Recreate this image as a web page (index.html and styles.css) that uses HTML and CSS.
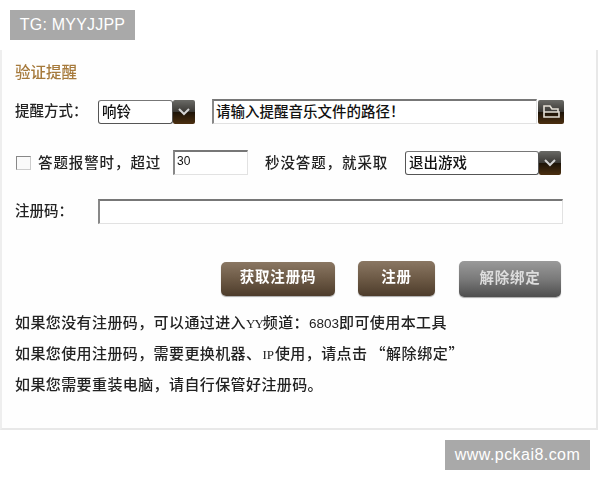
FILE: index.html
```html
<!DOCTYPE html>
<html lang="zh">
<head>
<meta charset="utf-8">
<title>验证提醒</title>
<link rel="stylesheet" href="styles.css">
</head>
<body>
<div class="page">
  <div class="tag tag-top">TG: MYYJJPP</div>
  <main class="panel">
    <div class="soft">
      <h2 class="title">验证提醒</h2>
      <div class="row row-1">
        <span class="label">提醒方式：</span>
        <div class="select select-ring">
          <span class="select-value">响铃</span>
          <span class="dark-btn arrow-btn"><svg viewBox="0 0 22 24" width="22" height="24"><path d="M6 9l5 5 5-5" fill="none" stroke="#d5d5d5" stroke-width="2"/></svg></span>
        </div>
        <div class="field field-path">请输入提醒音乐文件的路径！</div>
        <span class="dark-btn folder-btn"><svg viewBox="0 0 26 24" width="26" height="24"><path d="M6 16V6h6l2 3h6v3M6 12h15v5H6z" fill="none" stroke="#e4dfd5" stroke-width="1.6"/></svg></span>
      </div>
      <div class="row row-2">
        <span class="checkbox"></span>
        <span class="text-alarm">答题报警时，超过</span>
        <div class="field field-num">30</div>
        <span class="text-action">秒没答题，就采取</span>
        <div class="select select-action">
          <span class="select-value">退出游戏</span>
          <span class="dark-btn arrow-btn"><svg viewBox="0 0 22 24" width="22" height="24"><path d="M6 9l5 5 5-5" fill="none" stroke="#d5d5d5" stroke-width="2"/></svg></span>
        </div>
      </div>
      <div class="row row-3">
        <span class="label">注册码：</span>
        <div class="field field-code"></div>
      </div>
      <div class="buttons">
        <span class="btn btn-get">获取注册码</span>
        <span class="btn btn-reg">注册</span>
        <span class="btn btn-unbind">解除绑定</span>
      </div>
      <div class="notes">
        <p>如果您没有注册码，可以通过进入<span class="latin latin-yy">YY</span>频道：<span class="digits">6803</span>即可使用本工具</p>
        <p>如果您使用注册码，需要更换机器、<span class="latin">IP</span>使用，请点击<span class="quoted">“解除绑定”</span></p>
        <p>如果您需要重装电脑，请自行保管好注册码。</p>
      </div>
    </div>
  </main>
  <div class="tag tag-bottom">www.pckai8.com</div>
</div>
</body>
</html>
```

FILE: styles.css
```css
* { box-sizing: border-box; }
html, body { margin: 0; padding: 0; background: #fff; }
body { font-family: "Noto Sans CJK SC", "Liberation Sans", sans-serif; color: #222; }
.page { width: 600px; height: 480px; padding-top: 10px; overflow: hidden; display: flex; flex-direction: column; }
.tag { height: 30px; line-height: 30px; background: #a9a9a9; color: #fff; font-family: "Liberation Sans", sans-serif; font-size: 16px; text-align: center; }
.tag-top { width: 125px; margin-left: 10px; letter-spacing: 0.2px; }
.tag-bottom { width: 145px; margin: 10px 0 0 445px; letter-spacing: 0.45px; }
.panel { width: 598px; height: 380px; margin-top: 10px; border-left: 2px solid #eeeeee; border-right: 2px solid #e8e8e8; border-bottom: 2px solid #e8e8e8; background: #fefefe; padding: 13px 0 0 13px; }
.soft { filter: blur(0.45px); }
.title { margin: 0; height: 20px; line-height: 16px; font-size: 15.5px; font-weight: 500; color: #a67a3c; }
.row { display: flex; align-items: center; font-size: 14.5px; font-weight: 500; }
.row-1 { margin-top: 16px; height: 25px; }
.row-2 { margin-top: 25px; height: 26px; }
.row-3 { margin-top: 23px; height: 26px; }
.label { padding-bottom: 4px; }
.row-1 .label { width: 83px; }
.row-3 .label { width: 83px; padding-bottom: 3px; }
.select { display: flex; height: 24px; }
.select-value { flex: 1; border: 1px solid #555; border-top-color: #777; border-radius: 3px; padding-left: 3px; line-height: 19px; background: #fff; color: #111; font-size: 14.5px; }
.select-ring { width: 97px; }
.select-action { width: 156px; margin-left: 17px; margin-top: 2px; }
.dark-btn { display: block; height: 24px; border-radius: 2px; background: linear-gradient(#6a6a66 0%, #3c3a36 48%, #1e1408 52%, #4b2f10 100%); }
.dark-btn svg { display: block; }
.arrow-btn { width: 22px; }
.field { height: 25px; border: 1px solid #e2e2e2; border-top: 2px solid #777; border-left: 2px solid #888; background: #fff; color: #111; line-height: 19px; padding-left: 2px; }
.field-path { width: 325px; margin-left: 17px; }
.folder-btn { width: 26px; margin-left: 1px; }
.checkbox { width: 15px; height: 14px; margin-left: 1px; margin-top: 2px; border: 1px solid #ccc; border-top-color: #888; border-left-color: #888; background: #fafafa; }
.text-alarm { margin-left: 7px; width: 135px; letter-spacing: 0.9px; white-space: nowrap; padding-bottom: 2px; }
.field-num { width: 75px; font-family: "Liberation Sans", sans-serif; font-size: 12px; }
.text-action { margin-left: 17px; width: 123px; letter-spacing: 0.9px; white-space: nowrap; padding-bottom: 2px; }
.field-code { width: 465px; }
.buttons { display: flex; margin-top: 37px; margin-left: 206px; height: 35px; align-items: center; }
.btn { display: block; color: #fff; border-radius: 5px; text-align: center; font-size: 14.5px; font-weight: 700; letter-spacing: 0.8px; background: linear-gradient(#8a7763 0%, #6d5a46 50%, #4d3c2b 100%); box-shadow: 0 1px 1px #aaa; }
.btn-get { width: 114px; height: 34px; line-height: 28px; }
.btn-reg { width: 77px; height: 35px; line-height: 29px; margin-left: 23px; }
.btn-unbind { width: 102px; height: 36px; line-height: 32px; margin-left: 24px; color: #ddd; background: linear-gradient(#9a9a9a 0%, #7a7a7a 50%, #4e4e4e 100%); }
.notes { margin-top: 10px; font-size: 15px; font-weight: 500; letter-spacing: 0.4px; }
.notes p { margin: 0; height: 31px; line-height: 31px; white-space: nowrap; color: #222; }
.latin { font-family: "Liberation Serif", serif; font-size: 13px; letter-spacing: 0; margin: 0 1px; }
.latin-yy { margin: 0; letter-spacing: -1px; }
.digits { font-family: "Liberation Sans", sans-serif; font-size: 13.5px; letter-spacing: 0; }
.quoted { margin-left: 3px; letter-spacing: 0.6px; }
```
